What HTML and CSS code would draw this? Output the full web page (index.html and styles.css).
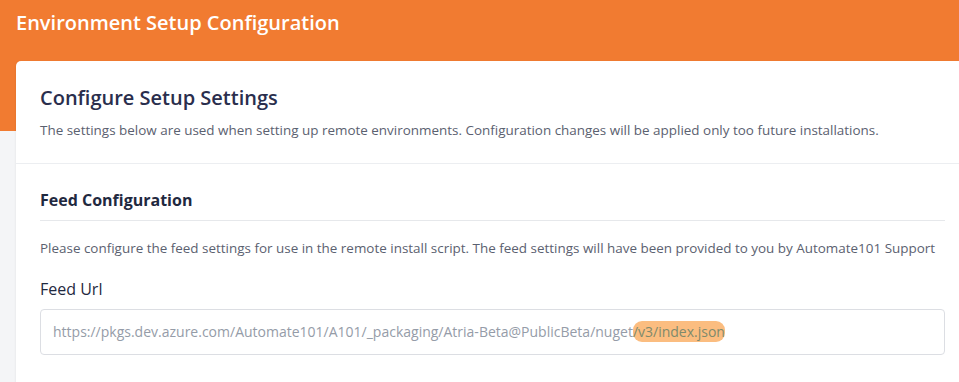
FILE: index.html
```html
<!doctype html>
<html>
<head>
<meta charset="utf-8">
<title>Environment Setup Configuration</title>
<link rel="stylesheet" href="styles.css">
</head>
<body>
<header class="hero">
	<h1 class="heroTitle">Environment Setup Configuration</h1>
</header>
<div class="main">
	<div class="card">
		<div class="cardHead">
			<h2 class="cardTitle">Configure Setup Settings</h2>
			<p class="cardDesc">The settings below are used when setting up remote environments. Configuration changes will be applied only too future installations.</p>
		</div>
		<div class="cardBody">
			<h3 class="sectionTitle">Feed Configuration</h3>
			<p class="sectionDesc">Please configure the feed settings for use in the remote install script. The feed settings will have been provided to you by Automate101 Support</p>
			<label class="fieldLabel" for="feedUrl">Feed Url</label>
			<div class="fieldInput" id="feedUrl">https://pkgs.dev.azure.com/Automate101/A101/_packaging/Atria-Beta@PublicBeta/nuget<span class="mark">/v3/index.json</span></div>
		</div>
	</div>
</div>
</body>
</html>
```
FILE: styles.css
```css
html,
body {
	margin: 0;
	background: #f4f5f7;
	font-family: "Open Sans", "Noto Sans", sans-serif;
	overflow: hidden;
}
.hero {
	height: 131px;
	background: #f17b31;
	padding: 0 16px;
	box-sizing: border-box;
}
.heroTitle {
	margin: 0;
	padding-top: 9px;
	font-size: 20px;
	line-height: 28px;
	font-weight: 600;
	color: #fff;
}
.main {
	margin-top: -70px;
	padding-left: 16px;
}
.card {
	background: #fff;
	border-radius: 5px 0 0 0;
	box-shadow: -1px 0 2px rgba(0,0,0,.04);
}
.cardHead {
	padding: 23px 24px 23px 24px;
	border-bottom: 1px solid #eceef1;
}
.cardTitle {
	margin: 0;
	font-size: 20px;
	line-height: 28px;
	font-weight: 600;
	color: #2a2e4d;
}
.cardDesc {
	margin: 8px 0 0;
	font-size: 13.45px;
	line-height: 20px;
	color: #5b6170;
}
.cardBody {
	padding: 24px 14px 30px 24px;
}
.sectionTitle {
	margin: 0;
	padding-bottom: 8px;
	border-bottom: 1px solid #e6e8eb;
	font-size: 16px;
	line-height: 24px;
	font-weight: 700;
	color: #1f2940;
}
.sectionDesc {
	margin: 17px 0 0;
	font-size: 13.45px;
	line-height: 20px;
	color: #5b6170;
}
.fieldLabel {
	display: block;
	margin-top: 19px;
	font-size: 16px;
	line-height: 24px;
	color: #1f2940;
}
.fieldInput {
	margin-top: 8px;
	height: 44px;
	padding: 0 12px;
	border: 1px solid #dcdee3;
	border-radius: 4px;
	font-size: 14px;
	line-height: 44px;
	color: #959ca8;
}
.mark {
	background: #fbbd80;
	border-radius: 9px;
	padding: 1px 0;
	color: #7f8a6c;
}
```
